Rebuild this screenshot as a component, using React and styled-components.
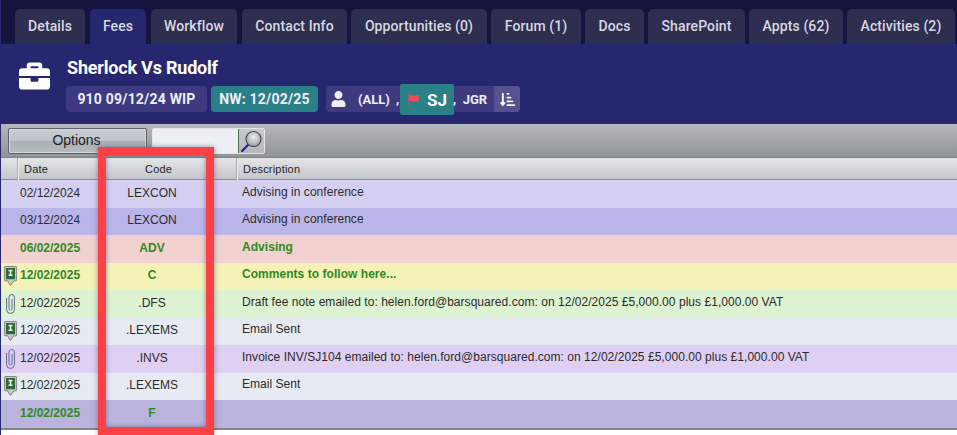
import React from 'react';
import styled, { createGlobalStyle } from 'styled-components';
import { FaBriefcase, FaUser, FaSortAmountDownAlt } from 'react-icons/fa';

const Global = createGlobalStyle`
  html, body { margin: 0; padding: 0; background: #fff; }
  body { width: 957px; height: 435px; overflow: hidden; }
`;

const Page = styled.div`
  position: relative;
  width: 957px;
  height: 435px;
  overflow: hidden;
  background: #fff;
  border-left: 1px solid #27276f;
  box-sizing: border-box;
`;

const TabBar = styled.div`
  display: flex;
  height: 44px;
  padding: 9px 0 0 14px;
  box-sizing: border-box;
  background: #14143f;
`;

const Tab = styled.div`
  width: ${p => p.$w}px;
  margin-right: ${p => p.$gap}px;
  padding-bottom: 2px;
  box-sizing: border-box;
  display: flex;
  align-items: center;
  justify-content: center;
  border-radius: 5px 5px 0 0;
  background: ${p => (p.$active ? '#27276f' : '#2e2e50')};
  color: #d8d8e0;
  font: 500 14px Roboto, sans-serif;
  letter-spacing: 0.1px;
  white-space: nowrap;
`;

const Header = styled.div`
  display: flex;
  height: 80px;
  background: #27276f;
  padding: 13px 0 0 18px;
  box-sizing: border-box;
  gap: 16px;
`;

const CaseIcon = styled.div`
  line-height: 0;
  color: #fff;
  margin-top: 3px;
  width: 31px;
  display: flex;
  justify-content: center;
  svg { width: 31px; height: 32px; }
`;

const HeadInfo = styled.div`
  display: flex;
  flex-direction: column;
  gap: 7px;
`;

const Title = styled.div`
  color: #fff;
  font: 700 18px/22px Roboto, sans-serif;
  letter-spacing: -0.2px;
  margin-left: 1px;
`;

const Badges = styled.div`
  display: flex;
  align-items: center;
  gap: 4px;
  height: 26px;
`;

const Badge = styled.div`
  height: 26px;
  width: ${p => p.$w}px;
  display: flex;
  align-items: center;
  justify-content: center;
  border-radius: 4px;
  background: ${p => (p.$teal ? '#2b7f86' : '#3d3a80')};
  color: #eeeef6;
  font: 700 14px Roboto, sans-serif;
  letter-spacing: 0.2px;
`;

const Team = styled.div`
  position: relative;
  margin-left: 4px;
  width: 194px;
  height: 26px;
  display: flex;
  align-items: center;
  border-radius: 4px;
  background: #3d3a80;
  color: #eeeef6;
  font: 700 13px Roboto, sans-serif;
`;

const UserGlyph = styled.span`
  display: flex;
  margin: 0 12px 0 5px;
  svg { width: 15px; height: 16px; }
`;

const Sep = styled.span`
  margin-left: 6px;
`;

const Current = styled.div`
  position: absolute;
  left: 74px;
  top: -2px;
  width: 54px;
  height: 31px;
  display: flex;
  align-items: center;
  gap: 8px;
  padding-left: 8px;
  box-sizing: border-box;
  border-radius: 2px;
  background: #2b7f86;
  color: #fff;
  font: 700 17px Roboto, sans-serif;
`;

const TeamEnd = styled.span`
  position: absolute;
  left: 127px;
  white-space: pre;
`;

const SortBtn = styled.div`
  margin-left: auto;
  width: 26px;
  height: 26px;
  display: flex;
  align-items: center;
  justify-content: center;
  border-radius: 0 4px 4px 0;
  background: #55528f;
  color: #fff;
  svg { width: 15px; height: 15px; }
`;

const Toolbar = styled.div`
  display: flex;
  height: 34px;
  padding: 4px 0 0 7px;
  gap: 5px;
  box-sizing: border-box;
  background: linear-gradient(#b4b7bd, #90959a);
  border-bottom: 1px solid #7d8290;
`;

const OptionsBtn = styled.div`
  width: 139px;
  height: 26px;
  padding-right: 2px;
  box-sizing: border-box;
  border: 1px solid #5c6068;
  border-radius: 2px;
  box-shadow: inset 0 0 0 1px #d5d8dc;
  background: linear-gradient(#c9ced3 0%, #bdc3c9 50%, #a9b1b7 52%, #b5bcc2 100%);
  color: #222;
  font: 14px/22px "Liberation Sans", Arial, sans-serif;
  text-align: center;
`;

const Search = styled.div`
  display: flex;
  width: 113px;
  height: 26px;
  box-sizing: border-box;
  border: 1px solid #e4e6ea;
  border-radius: 2px;
  background: #ecf0f5;
`;

const SearchField = styled.div`
  flex: 1;
  border-right: 1px solid #4d6a55;
`;

const SearchBtn = styled.div`
  width: 25px;
  background: linear-gradient(#c6c9ce, #b4b7be);
  display: flex;
  align-items: center;
  justify-content: center;
`;

const rowColumns = '17px 81px 143px 1fr';
const headColumns = '17px 81px 138px 1fr';

const HeadRow = styled.div`
  display: grid;
  grid-template-columns: ${headColumns};
  height: 22px;
  box-sizing: border-box;
  background: linear-gradient(#e4e6e8, #c3c7cb);
  border-bottom: 1px solid #8a8e96;
  color: #222;
  font: 11px/23px "Liberation Sans", Arial, sans-serif;
  letter-spacing: 0.2px;
`;

const HeadCell = styled.div`
  border-left: ${p => (p.$line ? '1px solid #f0f1f3' : 'none')};
  box-shadow: ${p => (p.$line ? '-1px 0 0 #a8acb2' : 'none')};
  padding-left: ${p => p.$pad || 0}px;
`;

const Row = styled.div`
  display: grid;
  grid-template-columns: ${rowColumns};
  height: 27.5px;
  align-items: center;
  background: ${p => p.$bg};
  color: ${p => (p.$bold ? '#2f8a1e' : '#2b2b2b')};
  font: ${p => (p.$bold ? 700 : 400)} 12px "Liberation Sans", Arial, sans-serif;
`;

const IconCell = styled.div`
  display: flex;
  padding-left: ${p => p.$pad}px;
  height: 24px;
  align-items: center;
`;

const DateCell = styled.div`
  padding: 0 0 2px 2px;
`;

const CodeCell = styled.div`
  text-align: center;
  width: 106px;
  padding-bottom: 2px;
`;

const DescCell = styled.div`
  white-space: nowrap;
  padding-bottom: 4px;
  letter-spacing: 0.04px;
`;

const TableEnd = styled.div`
  height: 2px;
  background: #858585;
`;

const Highlight = styled.div`
  position: absolute;
  left: 97px;
  top: 147px;
  width: 116px;
  height: 288px;
  box-sizing: border-box;
  border: 8px solid #fb4146;
  box-shadow: 0 0 5px rgba(60, 60, 90, .55), inset 0 0 5px rgba(60, 60, 90, .55);
`;

const Flag = () => (
  <svg width="11" height="11" viewBox="0 0 11 11">
    <path d="M.5 0h1v11h-1z" fill="#ee4a58" />
    <path d="M1.500.800C3.500-.200 5.500 1.800 7.500 1.300c1.200-.300 2.400-.500 3.200-.600v6.400c-1.500.200-2.600.900-4.400.800C4.500 7.800 3.300 6.600 1.500 7.300z" fill="#ee4a58" />
  </svg>
);

const NoteIcon = () => (
  <svg width="13" height="20" viewBox="0 0 13 20">
    <path d="M1.200.5h10.600a.8.8 0 0 1 .8.8v12.700a.8.8 0 0 1-.8.800H10L6.500 19.500 3.500 14.800H1.200a.8.8 0 0 1-.8-.8V1.300a.8.8 0 0 1 .8-.8z" fill="#c6c8c6" stroke="#6f6f6f" strokeWidth=".8" />
    <rect x="2" y="2" width="9" height="11.200" fill="#2a6a3a" />
    <path d="M4.500 3.800h4v1.500H7.300v3.200h1.200V10h-4V8.500h1.200V5.300H4.500z" fill="#f4f6e0" />
  </svg>
);

const ClipIcon = () => (
  <svg width="9" height="20" viewBox="0 0 9 20" fill="none" stroke="#5a688f" strokeWidth="1">
    <path d="M.6 4v11.500a3.900 3.900 0 0 0 7.800 0V3.200a2.700 2.700 0 0 0-5.400 0v11.300a1.500 1.500 0 0 0 3 0V5" />
  </svg>
);

const Magnifier = () => (
  <svg width="23" height="23" viewBox="0 0 23 23">
    <defs>
      <radialGradient id="lens" cx="50%" cy="38%" r="62%">
        <stop offset="0%" stopColor="#ecedee" />
        <stop offset="100%" stopColor="#9b9fa3" />
      </radialGradient>
    </defs>
    <path d="M8 15 2 21" stroke="#23238c" strokeWidth="2.200" strokeLinecap="round" />
    <circle cx="13.500" cy="9" r="7.500" fill="url(#lens)" stroke="#4a4a4a" strokeWidth="1.200" />
  </svg>
);

const tabs = [
  ['Details', 70, 5], ['Fees', 56, 5, true], ['Workflow', 86, 5], ['Contact Info', 105, 4],
  ['Opportunities (0)', 136, 4], ['Forum (1)', 90, 4], ['Docs', 59, 4], ['SharePoint', 97, 4],
  ['Appts (62)', 94, 4], ['Activities (2)', 108, 0],
];

const rows = [
  { bg: '#d5d0f2', date: '02/12/2024', code: 'LEXCON', desc: 'Advising in conference' },
  { bg: '#bbb6ea', date: '03/12/2024', code: 'LEXCON', desc: 'Advising in conference' },
  { bg: '#f2d2d0', date: '06/02/2025', code: 'ADV', desc: 'Advising', bold: true },
  { bg: '#f5f2b8', date: '12/02/2025', code: 'C', desc: 'Comments to follow here...', bold: true, icon: 'note' },
  { bg: '#def3d2', date: '12/02/2025', code: '.DFS', desc: 'Draft fee note emailed to: helen.ford@barsquared.com: on 12/02/2025 £5,000.00 plus £1,000.00 VAT', icon: 'clip' },
  { bg: '#e6eaf3', date: '12/02/2025', code: '.LEXEMS', desc: 'Email Sent', icon: 'note' },
  { bg: '#dfcff2', date: '12/02/2025', code: '.INVS', desc: 'Invoice INV/SJ104 emailed to: helen.ford@barsquared.com: on 12/02/2025 £5,000.00 plus £1,000.00 VAT', icon: 'clip' },
  { bg: '#e6eaf3', date: '12/02/2025', code: '.LEXEMS', desc: 'Email Sent', icon: 'note' },
  { bg: '#bab3dd', date: '12/02/2025', code: 'F', desc: '', bold: true },
];

export default function App() {
  return (
    <Page>
      <Global />
      <TabBar>
        {tabs.map(([label, w, gap, active]) => (
          <Tab key={label} $w={w} $gap={gap} $active={active}>{label}</Tab>
        ))}
      </TabBar>
      <Header>
        <CaseIcon><FaBriefcase /></CaseIcon>
        <HeadInfo>
          <Title>Sherlock Vs Rudolf</Title>
          <Badges>
            <Badge $w={141}>910 09/12/24 WIP</Badge>
            <Badge $w={107} $teal>NW: 12/02/25</Badge>
            <Team>
              <UserGlyph><FaUser /></UserGlyph>
              (ALL)<Sep>,</Sep>
              <Current><Flag />SJ</Current>
              <TeamEnd>,  JGR</TeamEnd>
              <SortBtn><FaSortAmountDownAlt /></SortBtn>
            </Team>
          </Badges>
        </HeadInfo>
      </Header>
      <Toolbar>
        <OptionsBtn>Options</OptionsBtn>
        <Search>
          <SearchField />
          <SearchBtn><Magnifier /></SearchBtn>
        </Search>
      </Toolbar>
      <HeadRow>
        <HeadCell />
        <HeadCell $line $pad={5}>Date</HeadCell>
        <HeadCell $pad={46}>Code</HeadCell>
        <HeadCell $line $pad={5}>Description</HeadCell>
      </HeadRow>
      {rows.map((r, i) => (
        <Row key={i} $bg={r.bg} $bold={r.bold}>
          <IconCell $pad={r.icon === 'clip' ? 5 : 3}>
            {r.icon === 'note' && <NoteIcon />}
            {r.icon === 'clip' && <ClipIcon />}
          </IconCell>
          <DateCell>{r.date}</DateCell>
          <CodeCell>{r.code}</CodeCell>
          <DescCell>{r.desc}</DescCell>
        </Row>
      ))}
      <TableEnd />
      <Highlight />
    </Page>
  );
}
